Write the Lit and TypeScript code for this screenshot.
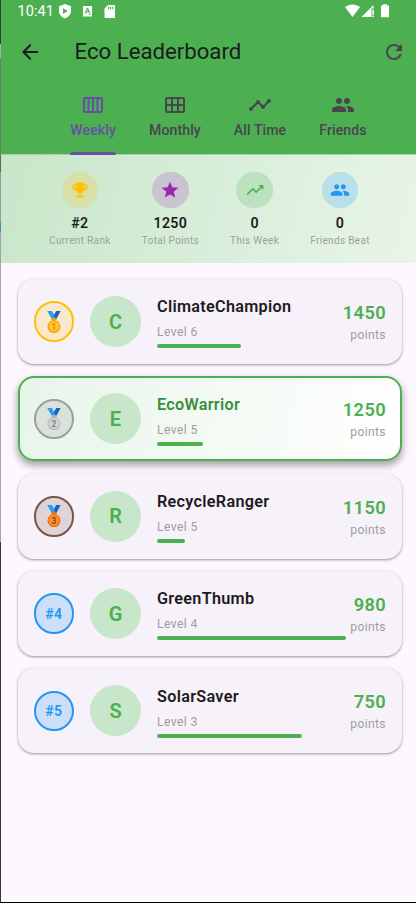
import { LitElement, html, css, svg } from "lit";
import { customElement, property } from "lit/decorators.js";
import { classMap } from "lit/directives/class-map.js";

const PATHS: Record<string, string> = {
  back: "M20 11H7.83l5.59-5.59L12 4l-8 8 8 8 1.41-1.41L7.83 13H20v-2z",
  refresh:
    "M17.65 6.35C16.2 4.9 14.21 4 12 4c-4.42 0-7.99 3.58-7.99 8s3.57 8 7.99 8c3.73 0 6.84-2.55 7.73-6h-2.08c-.82 2.33-3.04 4-5.65 4-3.31 0-6-2.69-6-6s2.69-6 6-6c1.66 0 3.14.69 4.22 1.78L13 11h7V4l-2.35 2.35z",
  week:
    "M20 4H4c-1.1 0-2 .9-2 2v12c0 1.1.9 2 2 2h16c1.1 0 2-.9 2-2V6c0-1.1-.9-2-2-2zM13 6h2.5v12H13V6zm-2 12H8.5V6H11v12zM4 6h2.5v12H4V6zm16 12h-2.5V6H20v12z",
  month:
    "M20 4H4c-1.1 0-2 .9-2 2v12c0 1.1.9 2 2 2h16c1.1 0 2-.9 2-2V6c0-1.1-.9-2-2-2zM8 11H4V6h4v5zm6 0h-4V6h4v5zm6 0h-4V6h4v5zM8 18H4v-5h4v5zm6 0h-4v-5h4v5zm6 0h-4v-5h4v5z",
  timeline:
    "M23 8c0 1.1-.9 2-2 2-.18 0-.35-.02-.51-.07l-3.56 3.55c.05.16.07.34.07.52 0 1.1-.9 2-2 2s-2-.9-2-2c0-.18.02-.36.07-.52l-2.55-2.55c-.16.05-.34.07-.52.07s-.36-.02-.52-.07l-4.55 4.56c.05.16.07.33.07.51 0 1.1-.9 2-2 2s-2-.9-2-2 .9-2 2-2c.18 0 .35.02.51.07l4.56-4.55C8.02 9.36 8 9.18 8 9c0-1.1.9-2 2-2s2 .9 2 2c0 .18-.02.36-.07.52l2.55 2.55c.16-.05.34-.07.52-.07s.36.02.52.07l3.55-3.56C19.02 8.35 19 8.18 19 8c0-1.1.9-2 2-2s2 .9 2 2z",
  friends:
    "M16 11c1.66 0 2.99-1.34 2.99-3S17.66 5 16 5c-1.66 0-3 1.34-3 3s1.34 3 3 3zm-8 0c1.66 0 2.99-1.34 2.99-3S9.66 5 8 5C6.34 5 5 6.34 5 8s1.34 3 3 3zm0 2c-2.33 0-7 1.17-7 3.5V19h14v-2.5c0-2.33-4.67-3.5-7-3.5zm8 0c-.29 0-.62.02-.97.05 1.16.84 1.97 1.97 1.97 3.45V19h6v-2.5c0-2.33-4.67-3.5-7-3.5z",
  trophy:
    "M19 5h-2V3H7v2H5c-1.1 0-2 .9-2 2v1c0 2.55 1.92 4.63 4.39 4.94.63 1.5 1.98 2.63 3.61 2.96V19H7v2h10v-2h-4v-3.1c1.63-.33 2.98-1.46 3.61-2.96C19.08 12.63 21 10.55 21 8V7c0-1.1-.9-2-2-2zM5 8V7h2v3.82C5.84 10.4 5 9.3 5 8zm14 0c0 1.3-.84 2.4-2 2.82V7h2v1z",
  star: "M12 17.27L18.18 21l-1.64-7.03L22 9.24l-7.19-.61L12 2 9.19 8.63 2 9.24l5.46 4.73L5.82 21z",
  trend:
    "M16 6l2.29 2.29-4.88 4.88-4-4L2 16.59 3.41 18l6-6 4 4 6.3-6.29L22 12V6z",
};

@customElement("md-icon")
export class MdIcon extends LitElement {
  @property() name = "";
  static styles = css`
    :host {
      display: block;
      width: 24px;
      height: 24px;
      flex: none;
    }
    svg {
      display: block;
      width: 100%;
      height: 100%;
      fill: currentColor;
    }
  `;
  render() {
    return html`<svg viewBox="0 0 24 24"><path d=${PATHS[this.name]} /></svg>`;
  }
}

const MEDALS = [
  { disc: "#ffb300", edge: "#f59b12", inner: "#ffca3a", ink: "#e98208" },
  { disc: "#c9c9cc", edge: "#b1b1b5", inner: "#d6d6d8", ink: "#85858a" },
  { disc: "#f6821f", edge: "#e56d10", inner: "#fb9233", ink: "#9c3d0c" },
];

@customElement("rank-badge")
export class RankBadge extends LitElement {
  @property({ type: Number }) rank = 1;
  static styles = css`
    :host {
      display: block;
      flex: none;
    }
    .badge {
      box-sizing: border-box;
      width: 40.5px;
      height: 40.5px;
      border-radius: 50%;
      border: 2px solid #2196f3;
      background: #cddff8;
      color: #2196f3;
      display: flex;
      align-items: center;
      justify-content: center;
      font: 600 14px/16px Roboto, sans-serif;
      letter-spacing: 0.2px;
    }
    .r1 {
      border-color: #ffc107;
      background: #f9e8ca;
    }
    .r2 {
      border-color: #9e9e9e;
      background: #dae3db;
    }
    .r3 {
      border-color: #795548;
      background: #ded3d6;
    }
    svg {
      display: block;
      width: 16px;
      height: 24px;
    }
    .num {
      font: 700 8.5px Roboto, sans-serif;
      text-anchor: middle;
    }
  `;
  private medal() {
    const m = MEDALS[this.rank - 1];
    return html`<svg viewBox="0 0 16 24">
      ${svg`
        <path d="M9.3 9 7.1 6.5 10.2 1H14.6L10.8 8.3Z" fill="#1565c0"/>
        <path d="M1.2 1H6.1L9.6 8.6H5.5Z" fill="#2f9bf3"/>
        <path d="M5.5 8.3h5l.5 1.7h-6z" fill=${m.edge}/>
        <circle cx="8" cy="16.6" r="6.5" fill=${m.edge}/>
        <circle cx="8" cy="16.3" r="5.9" fill=${m.disc}/>
        <circle cx="8" cy="16.6" r="4.6" fill=${m.inner}/>
        <text class="num" x="8" y="19.6" fill=${m.ink}>${this.rank}</text>`}
    </svg>`;
  }
  render() {
    return html`<div class="badge r${this.rank}">
      ${this.rank <= 3 ? this.medal() : `#${this.rank}`}
    </div>`;
  }
}

interface Player {
  name: string;
  level: number;
  points: number;
  me?: boolean;
}

const PLAYERS: Player[] = [
  { name: "ClimateChampion", level: 6, points: 1450 },
  { name: "EcoWarrior", level: 5, points: 1250, me: true },
  { name: "RecycleRanger", level: 5, points: 1150 },
  { name: "GreenThumb", level: 4, points: 980 },
  { name: "SolarSaver", level: 3, points: 750 },
];

const TABS = [
  { icon: "week", label: "Weekly" },
  { icon: "month", label: "Monthly" },
  { icon: "timeline", label: "All Time" },
  { icon: "friends", label: "Friends" },
];

const STATS = [
  { icon: "trophy", value: "#2", label: "Current Rank", tone: "gold" },
  { icon: "star", value: "1250", label: "Total Points", tone: "purple" },
  { icon: "trend", value: "0", label: "This Week", tone: "green" },
  { icon: "friends", value: "0", label: "Friends Beat", tone: "blue" },
];

@customElement("app-root")
export class AppRoot extends LitElement {
  static styles = css`
    :host {
      display: grid;
      grid-template-columns: 1px 1fr;
      box-sizing: border-box;
      width: 416px;
      height: 903px;
      overflow: hidden;
      border-bottom: 1px solid #000;
      font-family: Roboto, sans-serif;
      color: #1d1b20;
      background: #fef7ff;
    }
    .edge {
      background: linear-gradient(
        #3f3a44 0 44px,
        #b0a8b0 44px 58px,
        #6b806d 58px 155px,
        #47784a 155px 172px,
        #9c9a9c 172px 222px,
        #4490b8 222px 232px,
        #a5a2a6 232px 542px,
        #39363b 542px
      );
    }
    .screen {
      display: flex;
      flex-direction: column;
      min-width: 0;
    }
    .top {
      background: #4caf50;
      height: 155px;
      box-sizing: border-box;
      border-bottom: 1px solid #a9cfab;
      flex: none;
    }
    .status {
      height: 24px;
      display: flex;
      align-items: center;
      justify-content: space-between;
      color: #fff;
    }
    .clock {
      font-size: 14.5px;
      line-height: 24px;
      letter-spacing: 0.1px;
      padding-left: 16.5px;
      width: 40.5px;
    }
    .status svg {
      display: block;
      height: 24px;
      fill: #fff;
    }
    .left {
      display: flex;
    }
    .bar {
      height: 55px;
      display: flex;
      align-items: center;
      padding: 0 10px 0 16.5px;
    }
    .title {
      flex: 1;
      margin: -1px 0 0 33px;
      font-size: 22.2px;
      font-weight: 400;
      line-height: 27px;
    }
    .refresh {
      color: #49454f;
    }
    .tabs {
      display: flex;
      gap: 33px;
      padding: 14px 0 0 69.3px;
      color: #49454f;
    }
    .tab {
      display: flex;
      flex-direction: column;
      align-items: center;
      height: 62px;
      font-size: 14.1px;
      font-weight: 500;
      line-height: 20px;
      letter-spacing: 0.09px;
      white-space: nowrap;
    }
    .tab span {
      margin-top: 3px;
    }
    .tab.on {
      color: #6750a4;
    }
    .ink {
      margin-top: auto;
      align-self: stretch;
      height: 3px;
      border-radius: 3px 3px 0 0;
      background: #6750a4;
    }
    .stats {
      flex: none;
      box-sizing: border-box;
      height: 108px;
      padding: 16.5px 15px 0 17px;
      display: flex;
      justify-content: space-evenly;
      background: linear-gradient(104.6deg, #c8e6c9, #e8f5e9);
    }
    .stat {
      display: flex;
      flex-direction: column;
      align-items: center;
    }
    .dot {
      width: 36.5px;
      height: 36.5px;
      border-radius: 50%;
      display: flex;
      align-items: center;
      justify-content: center;
    }
    .dot md-icon {
      width: 20px;
      height: 20px;
    }
    .gold {
      color: #ffc107;
      background: #d8e0a8;
    }
    .purple {
      color: #9c27b0;
      background: #c9c4cf;
    }
    .green {
      color: #4caf50;
      background: #bce1bf;
    }
    .blue {
      color: #2196f3;
      background: #b9dfe8;
    }
    .value {
      margin-top: 4.5px;
      font-size: 14.2px;
      font-weight: 600;
      line-height: 20px;
      letter-spacing: 0.3px;
    }
    .label {
      font-size: 10.1px;
      line-height: 15px;
      letter-spacing: 0.3px;
      color: #9e9e9e;
      white-space: nowrap;
    }
    .list {
      display: flex;
      flex-direction: column;
      gap: 12.3px;
      padding: 16.2px 14px 0 16.5px;
    }
    .card {
      box-sizing: border-box;
      height: 85px;
      border-radius: 16px;
      padding: 0 16px;
      display: flex;
      align-items: center;
      background: #f7f1f9;
      box-shadow: 0 1px 2px rgba(0, 0, 0, 0.28), 0 1px 3px 1px rgba(0, 0, 0, 0.1);
    }
    .card.me {
      padding: 0 14px;
      border: 2px solid #4caf50;
      background: linear-gradient(102.5deg, #e8f5e9, #fff) border-box;
      box-shadow: 0 4px 6px rgba(0, 0, 0, 0.22), 0 4px 10px 1px rgba(0, 0, 0, 0.16);
    }
    .avatar {
      flex: none;
      width: 51px;
      height: 51px;
      margin: 0 16px;
      border-radius: 50%;
      background: #c8e6c9;
      color: #4caf50;
      display: flex;
      align-items: center;
      justify-content: center;
      font-size: 20px;
      font-weight: 600;
    }
    .info {
      flex: 1;
      min-width: 0;
      padding-top: 0.5px;
    }
    .name {
      font-size: 16.2px;
      font-weight: 600;
      line-height: 24px;
      letter-spacing: 0.3px;
    }
    .me .name {
      color: #388e3c;
    }
    .level {
      margin: 5px 0 4px;
      font-size: 12.15px;
      line-height: 16px;
      letter-spacing: 0.4px;
      color: #9e9e9e;
    }
    .fill {
      height: 4px;
      border-radius: 2px;
      background: #4caf50;
    }
    .score {
      text-align: right;
      padding-top: 0.5px;
    }
    .pts {
      font-size: 18.2px;
      font-weight: 600;
      line-height: 26px;
      letter-spacing: 0.4px;
      color: #4caf50;
    }
    .unit {
      font-size: 12.15px;
      line-height: 18px;
      letter-spacing: 0.35px;
      color: #9e9e9e;
    }
  `;

  private status() {
    return html`<div class="status">
      <div class="left">
        <span class="clock">10:41</span>
        <svg width="60" viewBox="58 0 60 24">
          <path
            fill-rule="evenodd"
            d="M65 4l6 2.3v4.7c0 3.4-2.5 6.1-6 7.4-3.5-1.3-6-4-6-7.4V6.3zM63 8.3v5.6l4.8-2.8z"
          />
          <path
            fill-rule="evenodd"
            d="M83 6h9v10.5h-9zM87 7.8 84.500 13.500h1.400l.5-1.200h2.200l.5 1.200h1.400L88 7.800zm.5 1.500.7 1.900h-1.400zM87 14.500v.6h4v-.6z"
          />
          <path
            fill-rule="evenodd"
            d="M108 5h6c.6 0 1 .4 1 1v11c0 .6-.4 1-1 1h-8.500c-.6 0-1-.4-1-1V8.500zM108 6.800v2.400h1.100V6.800zm2.100 0v2.400h1.100V6.800zm2.100 0v2.400h1.100V6.800z"
          />
        </svg>
      </div>
      <svg width="71" viewBox="345 0 71 24">
        <path d="M345 7c4.4-3.5 10.6-3.5 15 0l-7.5 10z" />
        <path d="M361.5 17 373.5 5v3.5h-2V17zM372.4 9.7h1.5v5h-1.5zM372.4 15.6h1.5V17h-1.5z" />
        <path d="M383 4.2h4v1.3h2V17.3h-8V5.5h2z" />
      </svg>
    </div>`;
  }

  private card(p: Player, i: number) {
    return html`<div class=${classMap({ card: true, me: !!p.me })}>
      <rank-badge .rank=${i + 1}></rank-badge>
      <div class="avatar">${p.name[0]}</div>
      <div class="info">
        <div class="name">${p.name}</div>
        <div class="level">Level ${p.level}</div>
        <div class="fill" style="width:${(p.points % 1000) / 10}%"></div>
      </div>
      <div class="score">
        <div class="pts">${p.points}</div>
        <div class="unit">points</div>
      </div>
    </div>`;
  }

  render() {
    return html`
      <div class="edge"></div>
      <div class="screen">
        <div class="top">
          ${this.status()}
          <div class="bar">
            <md-icon name="back"></md-icon>
            <h1 class="title">Eco Leaderboard</h1>
            <md-icon class="refresh" name="refresh"></md-icon>
          </div>
          <div class="tabs">
            ${TABS.map(
              (t, i) => html`<div class=${classMap({ tab: true, on: i === 0 })}>
                <md-icon name=${t.icon}></md-icon>
                <span>${t.label}</span>
                ${i === 0 ? html`<div class="ink"></div>` : ""}
              </div>`
            )}
          </div>
        </div>
        <div class="stats">
          ${STATS.map(
            (s) => html`<div class="stat">
              <div class="dot ${s.tone}"><md-icon name=${s.icon}></md-icon></div>
              <div class="value">${s.value}</div>
              <div class="label">${s.label}</div>
            </div>`
          )}
        </div>
        <div class="list">${PLAYERS.map((p, i) => this.card(p, i))}</div>
      </div>
    `;
  }
}
